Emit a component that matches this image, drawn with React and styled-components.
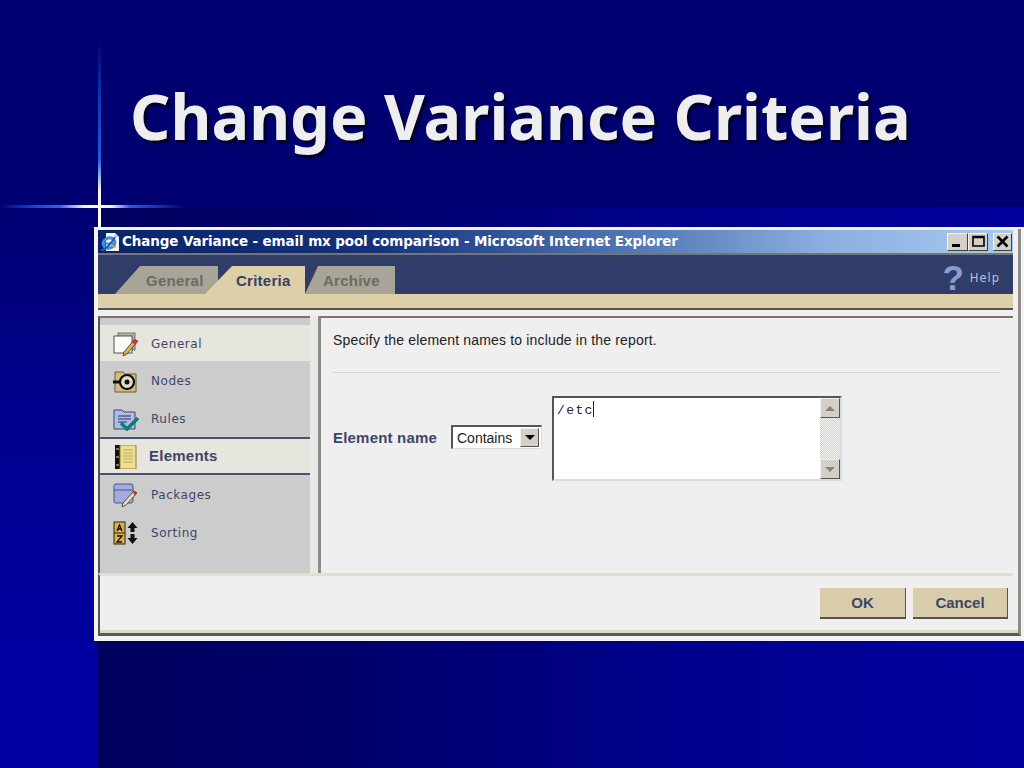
import React from "react";
import styled, { createGlobalStyle } from "styled-components";

const GlobalStyle = createGlobalStyle`
  html, body {
    margin: 0;
    padding: 0;
    background: #000070;
  }
`;

const Slide = styled.div`
  position: relative;
  width: 1024px;
  height: 768px;
  overflow: hidden;
  background:
    linear-gradient(180deg, #000070 0, #000072 205px, #00008c 400px, #0000a0 640px) 0 0 / 98px 100% no-repeat,
    linear-gradient(90deg, #00005e 0, #00006c 28%, #00008c 62%, #00009e 100%) 98px 207px / 926px 561px no-repeat,
    #000070;
  font-family: "Liberation Sans", Arial, sans-serif;
`;

const Title = styled.h1`
  margin: 0;
  height: 227px;
  padding: 79px 0 0 130px;
  box-sizing: border-box;
  font-family: "Noto Sans", Verdana, sans-serif;
  font-size: 63px;
  line-height: 74px;
  font-weight: 700;
  color: #eeeeee;
  text-shadow: 3px 3px 2px #00002a;
`;

const StarH = styled.div`
  position: absolute;
  left: 0;
  top: 205px;
  width: 185px;
  height: 3px;
  background: linear-gradient(90deg, #000070 0, #1040d0 30px, #3060e0 60px, #f4f4f0 84px, #fff 100px, #f0f0f0 112px, #2a5ae0 130px, #1030b0 160px, #000070 185px);
`;

const StarV = styled.div`
  position: absolute;
  left: 98px;
  top: 40px;
  width: 3px;
  height: 187px;
  background: linear-gradient(180deg, #000070 0, #0c30b0 50px, #1f5ee0 120px, #f4f4f4 150px, #fff 187px);
`;

const Window = styled.div`
  margin-left: 94px;
  width: 930px;
  height: 414px;
  box-sizing: border-box;
  padding: 2px 3px 5px 4px;
  background: #f4f4f2;
`;

const Frame = styled.div`
  height: 100%;
  box-sizing: border-box;
  padding: 1px 5px 0 0;
  background: #efefef;
  border-right: 3px solid #8c8b86;
  border-bottom: 3px solid #5c5a55;
  box-shadow: inset 0 -3px 0 #ddd9c8;
  display: flex;
  flex-direction: column;
`;

const TitleBar = styled.div`
  height: 23px;
  flex: none;
  display: flex;
  align-items: center;
  padding: 0 1px 0 2px;
  background: linear-gradient(90deg, #0a246a 0, #14307a 30%, #5a80bc 62%, #8cb0e0 80%, #a6caf0 100%);
`;

const WindowTitle = styled.span`
  flex: 1;
  margin: 0 0 2px 2px;
  font-family: "DejaVu Sans", Verdana, sans-serif;
  font-size: 13.5px;
  font-weight: 700;
  letter-spacing: -0.12px;
  color: #ffffff;
  white-space: nowrap;
`;

const CaptionButton = styled.div`
  width: ${(p) => p.$w}px;
  height: 18px;
  margin-left: ${(p) => p.$gap || 0}px;
  box-sizing: border-box;
  background: #d4d0c8;
  border: 1px solid;
  border-color: #f4f4f0 #404040 #404040 #f4f4f0;
  display: flex;
  align-items: center;
  justify-content: center;
`;

const TabBar = styled.div`
  height: 39px;
  flex: none;
  border-top: 2px solid #777570;
  background: #303d68;
  display: flex;
  align-items: flex-end;
  padding-left: 17px;
`;

const Tab = styled.div`
  width: ${(p) => p.$w}px;
  height: 28px;
  margin-right: ${(p) => p.$mr}px;
  padding-left: ${(p) => p.$pl}px;
  box-sizing: border-box;
  clip-path: polygon(${(p) => p.$slant}px 0, 100% 0, 100% 100%, 0 100%);
  background: ${(p) => (p.$active ? "#ddcfa8" : "#a8a498")};
  color: ${(p) => (p.$active ? "#34406a" : "#6c6a64")};
  font-size: 15px;
  font-weight: 700;
  letter-spacing: 0.25px;
  line-height: 30px;
  white-space: nowrap;
  position: relative;
  z-index: ${(p) => (p.$active ? 1 : 0)};
`;

const Help = styled.div`
  margin-left: auto;
  align-self: center;
  margin-right: 13px;
  margin-top: 6px;
  display: flex;
  align-items: center;
  gap: 5px;
  color: #b8c0dc;
  font-family: "DejaVu Sans", Verdana, sans-serif;
  font-size: 11.5px;
  letter-spacing: 1px;
`;

const HelpMark = styled.span`
  font-family: "Liberation Sans", Arial, sans-serif;
  font-size: 35px;
  line-height: 27px;
  font-weight: 700;
  color: #8e9cc8;
`;

const TanStrip = styled.div`
  height: 16px;
  flex: none;
  box-sizing: border-box;
  background: #ddcfa8;
  border-bottom: 2px solid #55534c;
`;

const Body = styled.div`
  height: 257px;
  flex: none;
  display: flex;
  margin-top: 6px;
`;

const Sidebar = styled.div`
  width: 212px;
  flex: none;
  box-sizing: border-box;
  background: #cccccc;
  padding-top: 7px;
  border-top: 2px solid #77756e;
  border-left: 2px solid #55534c;
`;

const NavItem = styled.div`
  height: ${(p) => p.$h}px;
  box-sizing: border-box;
  display: flex;
  align-items: center;
  padding: 2px 0 0 13px;
  gap: 12px;
  background: ${(p) => (p.$light || p.$selected ? "#e6e5de" : "transparent")};
  border-top: ${(p) => (p.$selected ? "2px solid #4a5070" : "0")};
  border-bottom: ${(p) => (p.$selected ? "2px solid #4a5070" : "0")};
  color: #3e4668;
  font-family: "DejaVu Sans", Verdana, sans-serif;
  font-size: 12px;
  letter-spacing: 0.55px;
`;

const SelectedLabel = styled.span`
  font-family: "Liberation Sans", Arial, sans-serif;
  font-size: 15px;
  font-weight: 700;
  letter-spacing: 0.25px;
  margin: 0 0 4px -2px;
`;

const Gutter = styled.div`
  width: 8px;
  flex: none;
  background: #e8e8e4;
`;

const Content = styled.div`
  flex: 1;
  padding: 13px 13px 0 12px;
  background: #efefef;
  border-top: 2px solid #77756e;
  border-left: 3px solid #8c8b86;
  color: #222;
  font-size: 14px;
`;

const Intro = styled.p`
  margin: 0;
  padding-bottom: 22px;
  line-height: 19px;
  letter-spacing: 0.17px;
  border-bottom: 1px solid #d9d5c5;
`;

const FormRow = styled.div`
  display: flex;
  align-items: flex-start;
  margin-top: 23px;
`;

const FieldLabel = styled.label`
  width: 118px;
  flex: none;
  margin-top: 32px;
  line-height: 19px;
  color: #3e4668;
  font-size: 15px;
  font-weight: 700;
  letter-spacing: 0.2px;
`;

const Select = styled.div`
  width: 91px;
  height: 24px;
  flex: none;
  margin-top: 29px;
  box-sizing: border-box;
  background: #fff;
  border-style: solid;
  border-width: 2px 1px 1px 2px;
  border-color: #555 #ddd #ddd #555;
  display: flex;
  align-items: center;
  padding: 0 2px 0 4px;
  font-size: 14px;
  color: #222;
`;

const SelectText = styled.span`
  flex: 1;
`;

const ScrollButton = styled.div`
  width: ${(p) => p.$w || 20}px;
  height: ${(p) => p.$h || 20}px;
  box-sizing: border-box;
  background: #d4d0c8;
  border: 1px solid;
  border-color: #f0f0ec #55534c #55534c #f0f0ec;
  display: flex;
  align-items: center;
  justify-content: center;
  flex: none;
`;

const Arrow = styled.i`
  width: 0;
  height: 0;
  border-left: 5px solid transparent;
  border-right: 5px solid transparent;
  ${(p) => (p.$up ? `border-bottom: 5px solid ${p.$color};` : `border-top: 5px solid ${p.$color};`)}
`;

const TextArea = styled.div`
  width: 290px;
  height: 85px;
  flex: none;
  margin-left: 10px;
  box-sizing: border-box;
  background: #fff;
  border: 2px solid;
  border-color: #555 #ddd #ddd #555;
  display: flex;
`;

const TextValue = styled.div`
  flex: 1;
  padding: 3px;
  font-family: "Liberation Mono", monospace;
  font-size: 13px;
  letter-spacing: 1.4px;
  line-height: 17px;
  color: #222;
`;

const Caret = styled.span`
  display: inline-block;
  width: 1px;
  height: 16px;
  margin-left: -1px;
  vertical-align: -3px;
  background: #222;
`;

const ScrollBar = styled.div`
  width: 20px;
  display: flex;
  flex-direction: column;
  justify-content: space-between;
  background: repeating-conic-gradient(#d4d0c8 0 25%, #f4f4f0 0 50%) 0 0 / 2px 2px;
`;

const Footer = styled.div`
  flex: 1;
  display: flex;
  justify-content: flex-end;
  align-items: flex-start;
  gap: 7px;
  padding: 12px 5px 0 0;
  box-sizing: border-box;
  background: #efefef;
  border-top: 3px solid #e2dfd0;
  border-left: 2px solid #55534c;
  box-shadow: inset 0 -3px 0 #ddd9c8;
`;

const ActionButton = styled.div`
  width: ${(p) => p.$w}px;
  height: 31px;
  box-sizing: border-box;
  background: #d8ccaa;
  border-right: 1px solid #55534c;
  border-bottom: 2px solid #55534c;
  color: #3e4668;
  font-size: 15px;
  font-weight: 700;
  line-height: 29px;
  text-align: center;
`;

const IeIcon = () => (
  <svg width="20" height="20" viewBox="0 0 20 20">
    <path d="M6 1h9l4 4v14H6z" fill="#f4f4f0" />
    <path d="M15 1v4h4" fill="#c8c8c0" />
    <ellipse cx="9" cy="11" rx="6" ry="5" fill="none" stroke="#3d8ce6" strokeWidth="3" transform="rotate(-20 9 11)" />
    <path d="M3 11.500h12" stroke="#3d8ce6" strokeWidth="2" />
    <path d="M1 18c3 1 10-6 14-13" stroke="#1c5ec0" strokeWidth="2" fill="none" />
    <path d="M12 14l4 1" stroke="#e0a050" strokeWidth="1.500" />
  </svg>
);

const WindowIcon = ({ kind }) => (
  <svg width="17" height="13" viewBox="0 0 17 13">
    {kind === "min" && <rect x="3" y="9" width="8" height="3" fill="#000" />}
    {kind === "max" && <path d="M3 1.500h11v9.500H3zM3 2.500h11" fill="none" stroke="#000" strokeWidth="1.600" />}
    {kind === "close" && <path d="M3.500 1.500l10 10M13.500 1.500l-10 10" stroke="#000" strokeWidth="2.600" />}
  </svg>
);

const NavIcon = ({ kind }) => (
  <svg width="26" height="24" viewBox="0 0 26 24">
    {kind === "general" && (
      <>
        <rect x="5" y="1" width="17" height="17" fill="#b0b0a8" stroke="#77756e" />
        <rect x="1" y="4" width="18" height="17" fill="#fafafa" stroke="#55534c" />
        <path d="M25 9L14 22l-4 2 1-4L21 8z" fill="#d8b848" stroke="#3a3020" strokeWidth="0.800" />
        <path d="M25 9l-3-2-3 3 3 3z" fill="#d03038" />
      </>
    )}
    {kind === "nodes" && (
      <>
        <path d="M2 3h8l2 2h11v18H2z" fill="#d8bc80" stroke="#6a5a34" />
        <path d="M0 13h9" stroke="#111" strokeWidth="3" />
        <circle cx="14" cy="13" r="7" fill="#e2dcc8" stroke="#111" strokeWidth="2.200" />
        <circle cx="14" cy="13" r="2.500" fill="#111" />
      </>
    )}
    {kind === "rules" && (
      <>
        <path d="M1 3h8l2 2h11v17H1z" fill="#b0bce8" stroke="#3e4668" />
        <path d="M5 9h13M5 12h13M5 15h9" stroke="#50608c" strokeWidth="1.500" />
        <path d="M8 16l6 6 11-11" fill="none" stroke="#0c8078" strokeWidth="3.600" />
      </>
    )}
    {kind === "elements" && (
      <>
        <rect x="2" y="0" width="6" height="24" fill="#111" />
        <rect x="7" y="0" width="16" height="24" fill="#f0de90" stroke="#8c7a30" />
        <path d="M10 5h10M10 8h10M10 11h10M10 14h10M10 17h10" stroke="#b8a860" />
        <path d="M3 4h3M3 12h3M3 20h3" stroke="#e8e0a0" />
      </>
    )}
    {kind === "packages" && (
      <>
        <rect x="1" y="1" width="19" height="19" rx="2" fill="#a4acdf" stroke="#4a5490" />
        <path d="M1 7h19" stroke="#4a5490" />
        <path d="M24 10L13 22l-4 2 1-4L21 8z" fill="#e4dcac" stroke="#403828" strokeWidth="0.800" />
        <path d="M24 10l-2-2-2 2 2 3z" fill="#d03038" />
      </>
    )}
    {kind === "sorting" && (
      <>
        <rect x="1" y="1" width="11" height="22" fill="#dcb048" stroke="#2c2410" />
        <path d="M1 12h11" stroke="#2c2410" />
        <path d="M4 10l2.500-6L9 10M5 8h3M4 15h5l-5 6h5" fill="none" stroke="#111" strokeWidth="1.300" />
        <path d="M19.500 1l5 6h-3v4h-4V7h-3zM19.500 23l5-6h-3v-4h-4v4h-3z" fill="#111" />
      </>
    )}
  </svg>
);

const navItems = [
  { id: "general", label: "General", light: true, h: 36 },
  { id: "nodes", label: "Nodes", h: 38 },
  { id: "rules", label: "Rules", h: 38 },
  { id: "elements", label: "Elements", selected: true, h: 38 },
  { id: "packages", label: "Packages", h: 38 },
  { id: "sorting", label: "Sorting", h: 38 },
];

export default function App() {
  return (
    <>
      <GlobalStyle />
      <Slide>
        <StarV />
        <StarH />
        <Title>Change Variance Criteria</Title>
        <Window>
          <Frame>
            <TitleBar>
              <IeIcon />
              <WindowTitle>Change Variance - email mx pool comparison - Microsoft Internet Explorer</WindowTitle>
              <CaptionButton $w={21}>
                <WindowIcon kind="min" />
              </CaptionButton>
              <CaptionButton $w={20}>
                <WindowIcon kind="max" />
              </CaptionButton>
              <CaptionButton $w={19} $gap={5}>
                <WindowIcon kind="close" />
              </CaptionButton>
            </TitleBar>
            <TabBar>
              <Tab $w={103} $mr={-13} $slant={25} $pl={31}>General</Tab>
              <Tab $w={100} $mr={0} $slant={27} $pl={31} $active>Criteria</Tab>
              <Tab $w={90} $mr={0} $slant={13} $pl={18}>Archive</Tab>
              <Help>
                <HelpMark>?</HelpMark>
                Help
              </Help>
            </TabBar>
            <TanStrip />
            <Body>
              <Sidebar>
                {navItems.map((item) => (
                  <NavItem key={item.id} $h={item.h} $light={item.light} $selected={item.selected}>
                    <NavIcon kind={item.id} />
                    {item.selected ? <SelectedLabel>{item.label}</SelectedLabel> : item.label}
                  </NavItem>
                ))}
              </Sidebar>
              <Gutter />
              <Content>
                <Intro>Specify the element names to include in the report.</Intro>
                <FormRow>
                  <FieldLabel>Element name</FieldLabel>
                  <Select>
                    <SelectText>Contains</SelectText>
                    <ScrollButton $h={19} $w={19}>
                      <Arrow $color="#000" />
                    </ScrollButton>
                  </Select>
                  <TextArea>
                    <TextValue>
                      /etc
                      <Caret />
                    </TextValue>
                    <ScrollBar>
                      <ScrollButton>
                        <Arrow $up $color="#85837c" />
                      </ScrollButton>
                      <ScrollButton>
                        <Arrow $color="#85837c" />
                      </ScrollButton>
                    </ScrollBar>
                  </TextArea>
                </FormRow>
              </Content>
            </Body>
            <Footer>
              <ActionButton $w={86}>OK</ActionButton>
              <ActionButton $w={95}>Cancel</ActionButton>
            </Footer>
          </Frame>
        </Window>
      </Slide>
    </>
  );
}
